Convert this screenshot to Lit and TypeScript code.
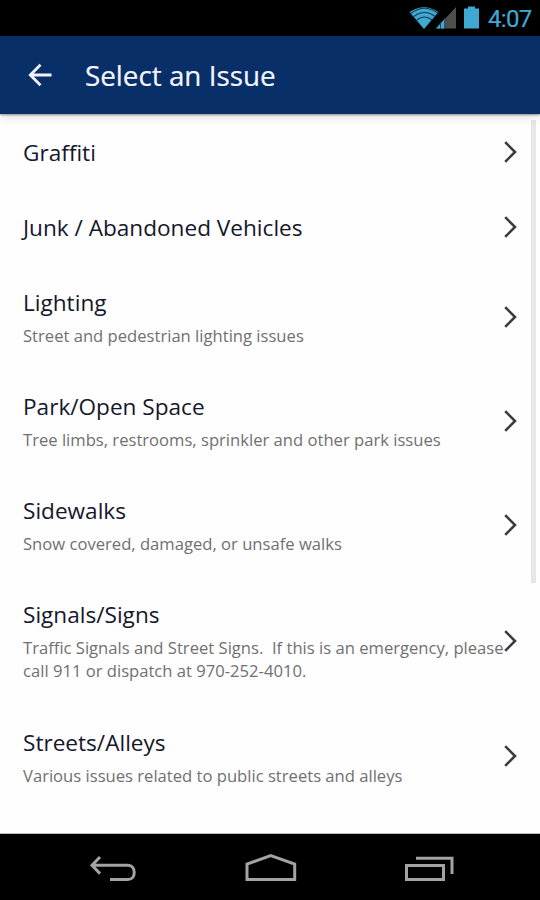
import { LitElement, html, css, svg, nothing } from "lit";
import { customElement, property } from "lit/decorators.js";

interface Issue {
  title: string;
  detail?: string;
}

const ISSUES: Issue[] = [
  { title: "Graffiti" },
  { title: "Junk / Abandoned Vehicles" },
  { title: "Lighting", detail: "Street and pedestrian lighting issues" },
  { title: "Park/Open Space", detail: "Tree limbs, restrooms, sprinkler and other park issues" },
  { title: "Sidewalks", detail: "Snow covered, damaged, or unsafe walks" },
  {
    title: "Signals/Signs",
    detail:
      "Traffic Signals and Street Signs.  If this is an emergency, please\ncall 911 or dispatch at 970-252-4010.",
  },
  { title: "Streets/Alleys", detail: "Various issues related to public streets and alleys" },
];

@customElement("status-bar")
export class StatusBar extends LitElement {
  static styles = css`
    :host {
      display: flex;
      height: 36px;
      flex: none;
      justify-content: flex-end;
      background: #000;
      color: #3fa9d3;
      font: 24px/36px Roboto, sans-serif;
    }
    .icons {
      display: block;
      width: 72px;
      height: 36px;
      margin-right: 8px;
    }
    .time {
      width: 52px;
      padding-top: 1px;
      box-sizing: border-box;
      letter-spacing: -0.7px;
      white-space: nowrap;
      -webkit-text-stroke: 0.2px #3fa9d3;
    }
  `;

  render() {
    const arcs = [
      "M411 13.2Q424.500 3.200 438 13.2",
      "M413.800 16.500Q424.500 8.400 435.200 16.500",
      "M416.800 20Q424.500 14 432.200 20",
    ];
    return html`
      <svg class="icons" viewBox="408 0 72 36" fill="none">
        <path d="M409.500 12Q424 2.500 438.500 12L424 29Z" fill="#3fa9d3" />
        ${arcs.map((d) => svg`<path d=${d} stroke="#12384a" stroke-width="1.100" />`)}
        <path d="M456 7V28.500H436Z" fill="#504d4d" />
        <path d="M445 18.500V28.500H436Z" fill="#3fa9d3" />
        <path d="M440.500 22V29M444.700 17V29" stroke="#123544" stroke-width=".8" />
        <path d="M464 8.500H468V6.500H475V8.500H479V28.500H464Z" fill="#3fa9d3" />
      </svg>
      <span class="time">4:07</span>
    `;
  }
}

@customElement("title-bar")
export class TitleBar extends LitElement {
  @property() heading = "";

  static styles = css`
    :host {
      display: flex;
      position: relative;
      z-index: 1;
      flex: none;
      align-items: center;
      height: 78px;
      padding-left: 28px;
      background: #082f68;
      box-shadow: 0 1px 2px rgba(0, 0, 0, 0.4), 0 3px 10px rgba(0, 0, 0, 0.13);
      color: #f5f6fb;
      font: 27.800px/36px "Open Sans", "Noto Sans", sans-serif;
    }
    .back {
      width: 24px;
      height: 24px;
      margin-right: 33px;
    }
    .heading {
      white-space: nowrap;
      -webkit-text-stroke: 0.2px #f5f6fb;
    }
  `;

  render() {
    return html`
      <svg class="back" viewBox="0 0 24 24" fill="none" stroke="#f2f3fa" stroke-width="2.800">
        <path d="M23.500 12H2.500M12.500 1.800L2.300 12L12.500 22.200" />
      </svg>
      <span class="heading">${this.heading}</span>
    `;
  }
}

@customElement("issue-row")
export class IssueRow extends LitElement {
  @property({ attribute: false }) issue: Issue = { title: "" };

  static styles = css`
    :host {
      display: flex;
      align-items: center;
      justify-content: space-between;
      padding: 24.600px 22px 22.700px 23px;
      font-family: "Open Sans", "Noto Sans", sans-serif;
    }
    .text {
      flex: 1;
      min-width: 0;
    }
    .title {
      color: #15172a;
      font-size: 22.600px;
      line-height: 28px;
      white-space: nowrap;
    }
    .detail {
      margin-top: 6.600px;
      margin-bottom: -1.200px;
      color: #707070;
      font-size: 16.630px;
      line-height: 23.400px;
      white-space: pre;
    }
    .chevron {
      flex: none;
      width: 14px;
      height: 22px;
      margin-bottom: 2px;
    }
  `;

  render() {
    const { title, detail } = this.issue;
    return html`
      <div class="text">
        <div class="title">${title}</div>
        ${detail ? html`<div class="detail">${detail}</div>` : nothing}
      </div>
      <svg class="chevron" viewBox="0 0 14 22" fill="none" stroke="#3c3c3c" stroke-width="2.600">
        <path d="M1.200 1.200L11 11L1.200 20.800" />
      </svg>
    `;
  }
}

@customElement("nav-bar")
export class NavBar extends LitElement {
  static styles = css`
    :host {
      display: flex;
      flex: none;
      align-items: center;
      justify-content: space-between;
      height: 66px;
      padding: 2px 85px 0 88px;
      box-sizing: border-box;
      background: #000;
    }
    svg {
      width: 52px;
      height: 36px;
      overflow: visible;
      fill: none;
      stroke: #a3a3a3;
      stroke-width: 3;
    }
  `;

  render() {
    return html`
      <svg viewBox="88 850 52 36">
        <path d="M92 865.300H128C136.300 865.300 136.300 879.500 128 879.500H110M100 857L92 865.300L100 873.600" />
      </svg>
      <svg viewBox="245.500 850 52 36">
        <path d="M246.500 879.500V864L270.200 855.700L294.200 864V879.500Z" />
      </svg>
      <svg viewBox="403 850 52 36">
        <path d="M406.500 865.500H443.500V879.500H406.500ZM416 858.200H452V874" />
      </svg>
    `;
  }
}

@customElement("app-root")
export class AppRoot extends LitElement {
  static styles = css`
    :host {
      display: flex;
      flex-direction: column;
      height: 900px;
      overflow: hidden;
      background: #fefefe;
    }
    .list {
      position: relative;
      flex: 1;
      min-height: 0;
      overflow: hidden;
      border-bottom: 1px solid #bbb;
      box-sizing: border-box;
    }
    .thumb {
      position: absolute;
      top: 6px;
      right: 4px;
      width: 5px;
      height: 463px;
      background: #e7e7e7;
    }
  `;

  render() {
    return html`
      <status-bar></status-bar>
      <title-bar heading="Select an Issue"></title-bar>
      <div class="list">
        ${ISSUES.map((issue) => html`<issue-row .issue=${issue}></issue-row>`)}
        <div class="thumb"></div>
      </div>
      <nav-bar></nav-bar>
    `;
  }
}
